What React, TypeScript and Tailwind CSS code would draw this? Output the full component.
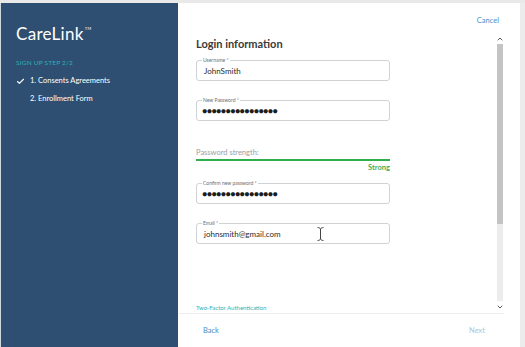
import { Check, ChevronUp, ChevronDown } from "lucide-react";

const Field = ({ label, value, dots }: { label: string; value: string; dots?: boolean }) => (
    <div className="relative h-[21px] w-[194px] rounded-[3px] border border-[#cfd3d6] bg-white">
        <span className="absolute -top-[4px] left-[5px] bg-white px-[1px] text-[5px] leading-[7px] text-[#6b6f73]">{label}</span>
        <div className={dots ? "pl-[5px] pt-[5px] text-[8.5px] leading-[10px] tracking-[-0.4px] text-[#1d1d1d]" : "pl-[7px] pt-[5px] text-[8px] leading-[10px] text-[#2b2b2b]"}>
            {value}
        </div>
    </div>
);

export default function App() {
    return (
        <div className="flex h-[347px] w-[525px] flex-col bg-[#e9e9e9] font-['Lato',sans-serif]">
            <div className="h-[3px] shrink-0" />
            <div className="flex min-h-0 flex-1">
                <div className="w-[1px] shrink-0 bg-[#cfd6dc]" />
                <div className="w-[177px] shrink-0 bg-[#2e4f71] pl-[15px] pt-[21px] text-white">
                    <div className="flex items-start text-[17px] leading-[20px] tracking-[0.3px]">
                        CareLink<span className="ml-[1px] mt-[3px] text-[4px] leading-[4px]">TM</span>
                    </div>
                    <div className="mt-[15px] text-[6.5px] leading-[8px] tracking-[0.2px] text-[#2bb3b5]">SIGN UP STEP 2/2</div>
                    <div className="mt-[9px] flex items-center text-[7.5px] leading-[10px]">
                        <Check size={9} strokeWidth={3} className="mr-[5px]" />
                        1. Consents Agreements
                    </div>
                    <div className="mt-[8px] pl-[14px] text-[7.5px] leading-[10px]">2. Enrollment Form</div>
                </div>
                <div className="flex w-[342px] shrink-0 flex-col bg-white">
                    <div className="flex justify-end pr-[21px] pt-[13px] text-[7.5px] leading-[10px] text-[#4a90c8]">Cancel</div>
                    <div className="mt-[4px] flex min-h-0 flex-1">
                        <div className="flex flex-1 flex-col pl-[18px] pt-[7px]">
                            <div className="text-[11px] font-bold leading-[14px] text-[#3a3a3a]">Login information</div>
                            <div className="mt-[9px]">
                                <Field label="Username *" value="JohnSmith" />
                            </div>
                            <div className="mt-[19px]">
                                <Field label="New Password *" value="●●●●●●●●●●●●●●●●" dots />
                            </div>
                            <div className="mt-[27px] w-[194px]">
                                <div className="text-[7.5px] leading-[10px] text-[#9a9ea2]">Password strength:</div>
                                <div className="mt-[1px] h-[2px] bg-[#2fae4e]" />
                                <div className="mt-[2px] text-right text-[7.5px] font-bold leading-[10px] text-[#3fae5a]">Strong</div>
                            </div>
                            <div className="mt-[10px]">
                                <Field label="Confirm new password *" value="●●●●●●●●●●●●●●●●" dots />
                            </div>
                            <div className="relative mt-[19px]">
                                <Field label="Email *" value="johnsmith@gmail.com" />
                                <svg className="absolute left-[121px] top-[4px]" width="7" height="14" viewBox="0 0 7 14" fill="none" stroke="#444" strokeWidth="1">
                                    <path d="M0.5 0.5 C2 0.5 3 1 3.5 2 C4 1 5 0.5 6.5 0.5 M3.5 2 V12 M0.5 13.5 C2 13.5 3 13 3.5 12 C4 13 5 13.5 6.5 13.5" />
                                </svg>
                            </div>
                            <div className="mt-auto pb-[1px] text-[6px] leading-[8px] text-[#2bb3b5]">Two-Factor Authentication</div>
                        </div>
                        <div className="mr-[16px] flex w-[8px] shrink-0 flex-col items-center">
                            <ChevronUp size={8} strokeWidth={3} className="mt-[5px] text-[#555]" />
                            <div className="mt-[1px] h-[180px] w-[6px] bg-[#c4c4c4]" />
                            <div className="w-[6px] flex-1 bg-[#ececec]" />
                            <ChevronDown size={8} strokeWidth={3} className="my-[2px] text-[#555]" />
                        </div>
                    </div>
                    <div className="mr-[16px] h-[1px] bg-[#eeeeee]" />
                    <div className="flex h-[33px] items-center justify-between pl-[25px] pr-[35px] text-[7.5px] leading-[10px]">
                        <span className="text-[#4a8cc0]">Back</span>
                        <span className="text-[#a9c6dc]">Next</span>
                    </div>
                </div>
                <div className="flex-1 bg-[#ececec]" />
            </div>
        </div>
    );
}
